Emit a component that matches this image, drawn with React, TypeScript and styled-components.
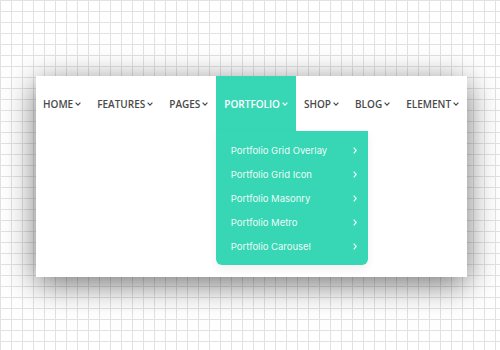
import * as React from 'react';
import styled, { createGlobalStyle } from "styled-components";

const GlobalStyle = createGlobalStyle`
    html, body {
        margin: 0;
        height: 100%;
    }
    body {
        background-color: #fff;
        background-image:
            linear-gradient(#e2e2e2 1px, transparent 1px),
            linear-gradient(90deg, #e2e2e2 1px, transparent 1px);
        background-size: 11px 11px;
        font-family: "Open Sans", "Liberation Sans", sans-serif;
    }
    #root {
        min-height: 100%;
    }
`

const TEAL = "#37d7b5"

const Page = styled.div`
    padding: 76px 0 0 36px;
`

const Card = styled.div`
    width: 431px;
    height: 201px;
    background: #fff;
    box-shadow: 0 7px 30px rgba(0, 0, 0, 0.55);
`

const Nav = styled.ul`
    display: flex;
    margin: 0;
    padding: 0;
    list-style: none;
`

const NavItem = styled.li<{ $active?: boolean }>`
    position: relative;
    display: flex;
    align-items: center;
    gap: 2px;
    height: 55px;
    padding: 0 8px;
    font-size: 10px;
    font-weight: 600;
    color: ${p => p.$active ? "#fff" : "#4a4a4a"};
    background: ${p => p.$active ? TEAL : "transparent"};
    cursor: pointer;

    &:first-child {
        padding-left: 7px;
    }

    svg {
        margin-top: 1px;
    }
`

const Dropdown = styled.ul`
    position: absolute;
    top: 100%;
    left: 0;
    width: 152px;
    margin: 0;
    padding: 7px 0;
    list-style: none;
    background: ${TEAL};
    border-radius: 0 0 6px 6px;
    box-shadow: 0 4px 10px rgba(0, 0, 0, 0.06);
`

const MenuItem = styled.li`
    display: flex;
    justify-content: space-between;
    align-items: center;
    height: 24px;
    padding: 0 11px 0 14.5px;
    font-family: Inter, "Open Sans", sans-serif;
    font-size: 9.5px;
    font-weight: 400;
    color: rgba(255, 255, 255, 0.93);
    white-space: nowrap;
`

const ChevronDown = () => (
    <svg width="6" height="4" viewBox="0 0 6 4" fill="none">
        <path d="M0.6 0.7 L3 3.1 L5.4 0.7" stroke="currentColor" strokeWidth="1.2" />
    </svg>
)

const ChevronRight = () => (
    <svg width="4" height="7" viewBox="0 0 4 7" fill="none">
        <path d="M0.7 0.7 L3.2 3.5 L0.7 6.3" stroke="currentColor" strokeWidth="1.2" />
    </svg>
)

const menu = ["HOME", "FEATURES", "PAGES", "PORTFOLIO", "SHOP", "BLOG", "ELEMENT"]

const portfolio = [
    "Portfolio Grid Overlay",
    "Portfolio Grid Icon",
    "Portfolio Masonry",
    "Portfolio Metro",
    "Portfolio Carousel",
]

function App() {
    const active = "PORTFOLIO"
    return (
        <>
            <GlobalStyle />
            <Page>
                <Card>
                    <Nav>
                        {menu.map(m => (
                            <NavItem key={m} $active={m === active}>
                                {m}
                                <ChevronDown />
                                {m === active && (
                                    <Dropdown>
                                        {portfolio.map(p => (
                                            <MenuItem key={p}>
                                                {p}
                                                <ChevronRight />
                                            </MenuItem>
                                        ))}
                                    </Dropdown>
                                )}
                            </NavItem>
                        ))}
                    </Nav>
                </Card>
            </Page>
        </>
    )
}

export default App
